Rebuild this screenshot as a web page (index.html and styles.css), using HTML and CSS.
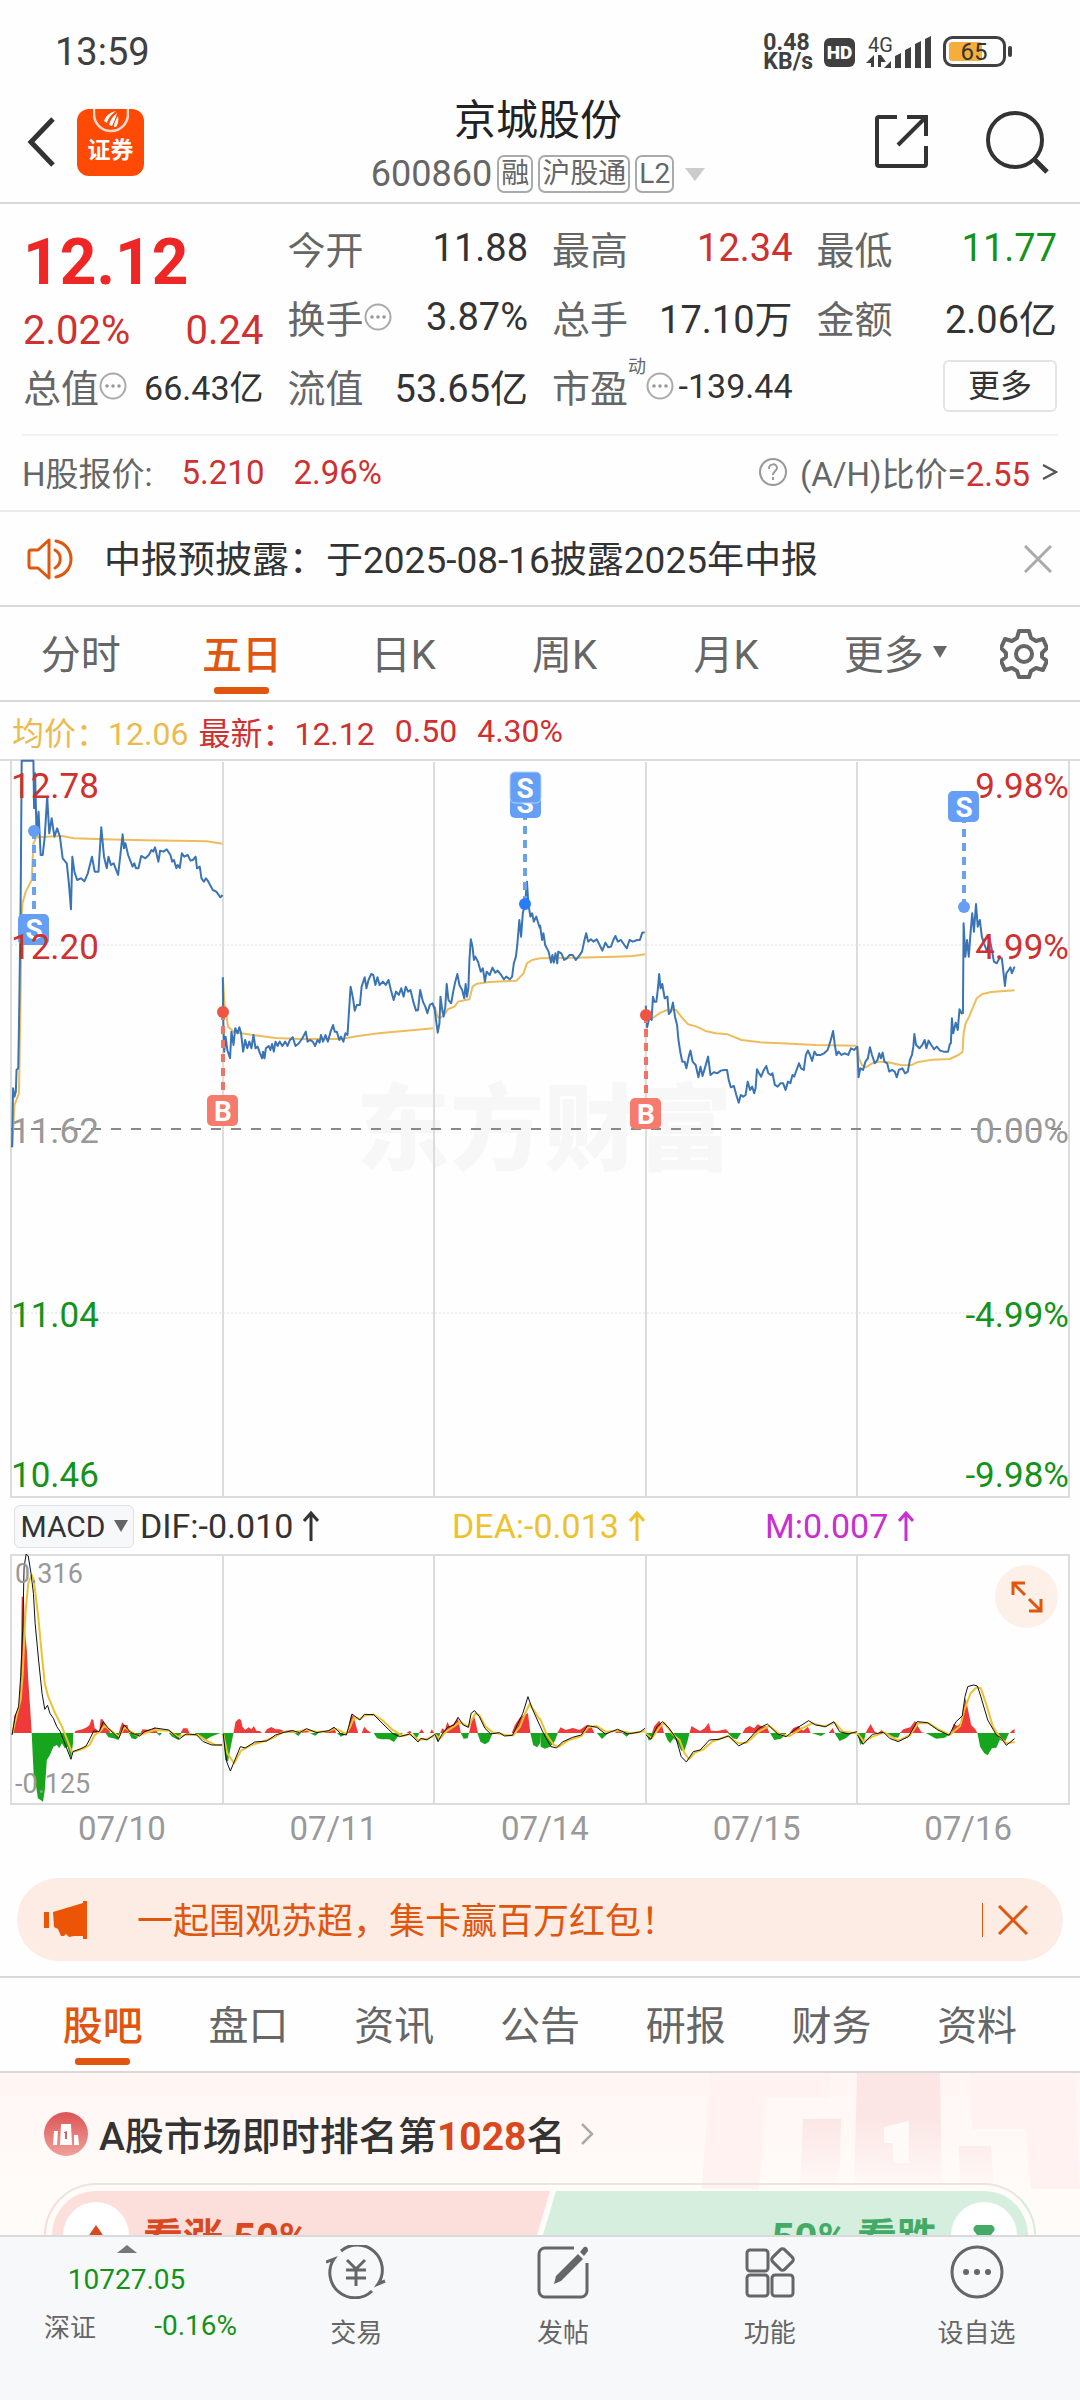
FILE: index.html
```html
<!DOCTYPE html>
<html lang="zh-CN">
<head>
  <meta charset="UTF-8">
  <meta name="viewport" content="width=device-width, initial-scale=1.0">
  <title>京城股份 600860</title>
  <link rel="stylesheet" href="styles.css">
</head>
<body>

<div class="status-bar">
  <span class="clock">13:59</span>
  <div class="status-icons">
    <div class="net-speed"><span>0.48</span><span>KB/s</span></div>
    <span class="hd">HD</span>
    <svg width="66" height="36" viewBox="0 0 66 36">
      <text x="2" y="18" class="sig-text">4G</text>
      <path fill="#404040" d="M5 21v12h3V21L0 29h5zM12 33V21h3l5 7h-5v5z"/>
      <path fill="#404040" d="M18 34l7-7v7zM29 22l6-3v15h-6zM39 16l6-3v21h-6zM49 10l6-3v27h-6zM59 5l6-3v32h-6z"/>
    </svg>
    <svg width="70" height="32" viewBox="0 0 70 32">
      <rect x="1.5" y="1.5" width="60" height="28" rx="8" fill="none" stroke="#404040" stroke-width="3"/>
      <rect x="6" y="6" width="33" height="19" rx="3" fill="#f5ae3c"/>
      <rect x="65" y="10" width="4" height="11" rx="2" fill="#404040"/>
      <text x="31" y="24" text-anchor="middle" class="battery-text">65</text>
    </svg>
  </div>
</div>

<header class="top">
  <div class="top-left">
    <button class="icon-btn" aria-label="返回">
      <svg width="30" height="50" viewBox="0 0 30 50"><path d="M26 2L4 25l22 23" fill="none" stroke="#333" stroke-width="5"/></svg>
    </button>
    <a href="#" class="app-logo">
      <svg width="36" height="25" viewBox="0 0 36 25">
        <path d="M1 0v5a17 17 0 0 0 34 0V0" fill="none" stroke="#ffd9cc" stroke-width="2.5"/>
        <path d="M11 12c2-6 7-9 12-10-4 3-8 7-9 12zM16 16c1-5 4-9 8-12-1 4-3 9-5 13zM21 18c0-4 2-8 4-11 1 4 0 8-2 11z" fill="#fff"/>
      </svg>
      <span>证券</span>
    </a>
  </div>
  <div class="top-title">
    <h1>京城股份</h1>
    <div class="code-row">
      <span>600860</span><span class="tag">融</span><span class="tag">沪股通</span><span class="tag">L2</span>
      <svg class="caret" width="20" height="13" viewBox="0 0 20 13"><path d="M0 0h20L10 13z" fill="#ccc"/></svg>
    </div>
  </div>
  <div class="top-right">
    <button class="icon-btn" aria-label="分享">
      <svg width="54" height="54" viewBox="0 0 54 54" fill="none" stroke="#333" stroke-width="4">
        <path d="M22 2H4a2 2 0 0 0-2 2v45a2 2 0 0 0 2 2h45a2 2 0 0 0 2-2V31M32 2h19v19M51 2L23 30"/>
      </svg>
    </button>
    <button class="icon-btn" aria-label="搜索">
      <svg width="64" height="64" viewBox="0 0 64 64" fill="none" stroke="#333" stroke-width="4">
        <circle cx="30" cy="30" r="27"/><path d="M49 49l13 13" stroke-width="5"/>
      </svg>
    </button>
  </div>
</header>

<section class="quote">
  <div class="price-block">
    <div class="price">12.12</div>
    <div class="change"><span>2.02%</span><span>0.24</span></div>
  </div>
  <div class="cell"><span class="k">今开</span><span class="v">11.88</span></div>
  <div class="cell"><span class="k">最高</span><span class="v red">12.34</span></div>
  <div class="cell"><span class="k">最低</span><span class="v green">11.77</span></div>
  <div class="cell"><span class="k">换手<svg class="dots" viewBox="0 0 28 28"><use href="#dots"/></svg></span><span class="v">3.87%</span></div>
  <div class="cell"><span class="k">总手</span><span class="v">17.10万</span></div>
  <div class="cell"><span class="k">金额</span><span class="v">2.06亿</span></div>
  <div class="cell"><span class="k">总值<svg class="dots" viewBox="0 0 28 28"><use href="#dots"/></svg></span><span class="v small">66.43亿</span></div>
  <div class="cell"><span class="k">流值</span><span class="v">53.65亿</span></div>
  <div class="cell"><span class="k">市盈<sup>动</sup><svg class="dots" viewBox="0 0 28 28"><use href="#dots"/></svg></span><span class="v small">-139.44</span></div>
  <div class="cell end"><button class="more-btn">更多</button></div>
</section>

<section class="h-row">
  <span>H股报价:</span>
  <span class="red">5.210</span>
  <span class="red">2.96%</span>
  <a href="#" class="ah">
    <svg width="30" height="30" viewBox="0 0 30 30" fill="none" stroke="#999" stroke-width="2">
      <circle cx="15" cy="15" r="13"/><path d="M11 12c0-6 8-6 8-1 0 3-4 3-4 7"/><path d="M15 20v3"/>
    </svg>
    <span>(A/H)比价=<b class="red">2.55</b></span>
    <svg width="16" height="20" viewBox="0 0 16 20"><path d="M1 3l13 7-13 7" fill="none" stroke="#555" stroke-width="2.5"/></svg>
  </a>
</section>

<section class="notice">
  <svg width="48" height="42" viewBox="0 0 48 42" fill="none" stroke="#e0560f" stroke-width="3">
    <path d="M22 2v38L11 30H4a2 2 0 0 1-2-2V14a2 2 0 0 1 2-2h7z" stroke-linejoin="round"/>
    <path d="M28 12c7 4 7 14 0 18M29 3c20 4 20 32 0 36" stroke-linecap="round"/>
  </svg>
  <span class="notice-text">中报预披露：于2025-08-16披露2025年中报</span>
  <button class="icon-btn" aria-label="关闭">
    <svg width="28" height="28" viewBox="0 0 28 28"><path d="M1 1l26 26M27 1L1 27" stroke="#aaa" stroke-width="3"/></svg>
  </button>
</section>

<nav class="tabs period">
  <a href="#">分时</a>
  <a href="#" class="active">五日</a>
  <a href="#">日K</a>
  <a href="#">周K</a>
  <a href="#">月K</a>
  <a href="#" class="more-tab">更多<svg width="14" height="12" viewBox="0 0 14 12"><path d="M0 0h14L7 12z" fill="#666"/></svg></a>
  <button class="icon-btn gear" aria-label="设置">
    <svg width="48" height="50" viewBox="0 0 48 50" fill="none" stroke="#666" stroke-width="4" stroke-linejoin="round">
      <path d="M19 2h10l2 7 5 3 7-2 4 9-5 5v4l5 4-4 9-7-2-5 3-2 6H19l-2-6-5-3-7 2-4-9 5-4v-4l-5-5 4-9 7 2 5-3z"/>
      <circle cx="24" cy="25" r="8"/>
    </svg>
  </button>
</nav>

<div class="avg-row">
  <span class="yellow">均价：12.06</span>
  <span class="red">最新：12.12</span>
  <span class="red gap">0.50</span>
  <span class="red gap">4.30%</span>
</div>

<!-- 五日分时图 -->
<svg class="chart" viewBox="0 759 1080 739">
  <g class="watermark"><text x="356" y="1163">东方财富</text></g>
  <g class="grid">
    <path d="M0 760H1080M11 760V1497H1069V760M223 762V1497M434 762V1497M646 762V1497M857 762V1497"/>
    <path d="M11 945H1069M11 1313H1069" class="dotted"/>
    <path d="M11 1129H1069" class="zero"/>
  </g>
  <g transform="translate(0 740) scale(.3444 .3333)">
    <path class="avg" d="M36 1222L40 1130 42 1095 55 1060 60 760 62 560 65 490 75 455 92 420 97 310 105 292 180 288 215 295 300 298 420 301 560 303 600 304 646 311M647 712L652 790 662 860 680 877 740 886 800 894 870 897 990 897 1040 888 1100 880 1180 872 1258 865M1262 800L1270 830 1276 835 1290 825 1300 808 1320 800 1330 785 1363 778 1372 740 1385 731 1420 726 1500 722 1520 700 1530 670 1545 660 1568 655"/>
    <path class="line" d="M35 1222L38 1045 42 1070 46 1055 48 990 53 985 56 800 60 480 63 62 97 62 99 205 102 100 106 280 112 215 118 345 124 345 130 290 137 170 143 280 150 235 158 290 166 265 174 290 182 355 194 370 200 430 206 508 210 350 216 395 224 420 235 415 245 424 255 400 267 350 275 395 286 395 294 262 302 350 310 385 315 350 322 375 330 370 343 405 350 340 356 283 360 325 364 310 372 345 385 380 390 370 395 385 402 385 410 348 422 355 432 345 440 330 445 335 450 322 460 365 465 332 475 335 484 328 495 345 500 365 505 360 512 385 516 375 522 384 528 340 535 350 545 345 553 362 560 360 568 350 572 385 580 380 585 415 592 425 598 415 605 425 618 450 628 455 640 472 646 465"/>
    <path class="line" d="M647 712L648 830 651 935 655 890 660 930 668 955 672 875 678 915 683 865 690 880 695 862 700 880 706 935 712 900 718 925 724 905 730 925 736 885 742 925 748 920 755 940 761 955 764 935 768 955 772 925 780 918 785 930 790 912 795 935 800 905 806 918 812 905 820 918 828 905 835 918 842 900 850 892 858 918 868 910 878 895 888 875 893 905 900 900 908 905 915 918 922 900 928 908 932 885 938 905 945 885 952 905 960 875 967 855 972 875 978 875 985 900 990 890 997 905 1003 880 1009 885 1013 820 1018 740 1025 775 1030 812 1036 795 1045 795 1050 740 1059 712 1064 745 1070 720 1078 702 1084 705 1090 735 1096 712 1102 735 1112 725 1120 735 1128 720 1135 750 1143 780 1150 755 1158 765 1165 745 1172 770 1178 740 1185 755 1192 750 1200 785 1208 812 1214 810 1220 750 1228 785 1235 800 1241 820 1248 795 1256 790 1261 805"/>
    <path class="line" d="M1261 800L1266 840 1271 878 1276 850 1279 770 1284 810 1288 830 1293 800 1297 732 1302 780 1310 790 1316 755 1322 725 1328 702 1334 735 1342 750 1348 775 1352 732 1356 770 1360 745 1363 660 1367 598 1372 620 1376 660 1380 650 1388 665 1396 695 1402 685 1408 725 1413 695 1422 705 1430 683 1438 698 1445 692 1455 705 1463 718 1470 710 1480 718 1487 710 1492 670 1498 650 1502 615 1508 540 1513 590 1518 520 1525 490 1530 425 1534 490 1540 530 1545 520 1550 545 1557 530 1563 550 1568 565"/>
  </g>
  <g transform="translate(540 740) scale(.3444 .3333)">
    <path class="avg" d="M0 655L100 653 220 650 270 648 305 643M312 840L330 832 350 818 370 810 395 810 410 830 430 853 455 860 480 873 510 880 545 883 585 900 640 907 700 910 800 915 918 917M922 920L926 955 935 975 945 982 965 970 985 965 1010 967 1050 976 1080 975 1095 967 1140 959 1190 957 1215 945 1227 935 1230 880 1236 850 1246 830 1258 800 1268 775 1285 762 1310 756 1378 751"/>
    <path class="line" d="M0 555L6 600 10 580 15 615 25 635 32 668 36 645 40 668 45 640 50 670 53 635 62 640 70 660 78 655 86 645 95 645 104 660 112 650 122 635 128 605 134 580 140 605 148 598 155 605 165 598 173 615 181 632 190 608 198 622 206 620 213 600 219 588 226 605 235 600 245 615 252 625 260 600 270 605 282 600 290 600 297 578 304 577"/>
    <path class="line" d="M307 797L311 862 318 830 324 840 328 770 332 785 338 785 342 750 346 702 350 745 355 732 362 775 370 770 374 822 380 815 386 788 392 830 398 855 402 900 408 940 413 965 420 965 425 985 432 950 437 932 443 965 452 975 460 1012 466 980 472 1008 480 980 488 950 495 1005 505 997 515 1000 525 992 535 990 543 990 548 1020 554 1042 563 1038 570 1065 577 1088 583 1065 590 1070 597 1065 603 1025 610 1050 616 1040 622 1060 626 1045 630 988 636 1000 642 1010 650 990 657 978 663 1000 670 1005 675 1000 682 1035 690 1040 698 1030 706 1030 713 1050 720 1025 727 1030 733 1005 738 1010 745 990 752 970 758 985 766 990 772 945 778 932 784 945 790 963 797 935 803 945 815 945 825 940 835 930 843 905 851 873 856 915 861 945 867 935 875 945 885 940 895 945 903 925 912 930 921 920 925 1012 930 985 938 990 945 965 952 955 958 922 964 945 972 970 980 960 985 940 990 955 995 938 1000 965 1008 970 1014 995 1022 990 1030 995 1036 1012 1042 990 1052 985 1060 1000 1068 995 1074 960 1080 945 1084 920 1087 882 1092 915 1102 925 1110 915 1117 900 1122 925 1128 902 1136 915 1144 928 1152 920 1162 932 1172 935 1185 935 1190 912 1193 910 1196 835 1200 880 1207 848 1213 870 1218 808 1224 820 1228 820 1230 550 1235 650 1240 600 1245 650 1250 580 1255 520 1260 575 1266 492 1271 560 1277 540 1283 590 1290 612 1298 635 1306 598 1312 630 1318 665 1326 670 1334 655 1341 655 1346 700 1350 738 1354 700 1361 690 1366 682 1370 700 1378 680"/>
  </g>
  <!-- 买卖点 -->
  <g class="sell">
    <path d="M34 831V914M525 904V818M964 907V822"/>
    <circle cx="34" cy="831" r="6"/><circle cx="525" cy="904" r="6" class="strong"/><circle cx="964" cy="907" r="6"/>
    <rect x="18" y="914" width="31" height="31" rx="5"/><text x="34" y="939">S</text>
    <rect x="510" y="787" width="31" height="31" rx="5"/><text x="525" y="813">S</text>
    <rect x="510" y="772" width="31" height="31" rx="5" class="top-mark"/><text x="525" y="798">S</text>
    <rect x="948" y="791" width="31" height="31" rx="5"/><text x="964" y="817">S</text>
  </g>
  <g class="buy">
    <path d="M223 1012V1095M646 1015V1098"/>
    <circle cx="223" cy="1012" r="6"/><circle cx="646" cy="1015" r="6"/>
    <rect x="207" y="1095" width="31" height="31" rx="5"/><text x="223" y="1121">B</text>
    <rect x="630" y="1098" width="31" height="31" rx="5"/><text x="646" y="1124">B</text>
  </g>
  <g class="axis">
    <text x="11" y="798" class="up">12.78</text><text x="1069" y="798" class="up right">9.98%</text>
    <text x="11" y="959" class="up">12.20</text><text x="1069" y="959" class="up right">4.99%</text>
    <text x="11" y="1143" class="flat">11.62</text><text x="1069" y="1143" class="flat right">0.00%</text>
    <text x="11" y="1327" class="down">11.04</text><text x="1069" y="1327" class="down right">-4.99%</text>
    <text x="11" y="1487" class="down">10.46</text><text x="1069" y="1487" class="down right">-9.98%</text>
  </g>
</svg>

<div class="macd-row">
  <div class="macd-item"><button class="macd-btn">MACD<svg width="14" height="12" viewBox="0 0 14 12"><path d="M0 0h14L7 12z" fill="#666"/></svg></button><span>DIF:-0.010<svg class="arrow" viewBox="0 0 16 30"><path d="M8 30V2M1 10l7-8 7 8"/></svg></span></div>
  <span class="dea">DEA:-0.013<svg class="arrow" viewBox="0 0 16 30"><path d="M8 30V2M1 10l7-8 7 8"/></svg></span>
  <span class="m">M:0.007<svg class="arrow" viewBox="0 0 16 30"><path d="M8 30V2M1 10l7-8 7 8"/></svg></span>
</div>

<!-- MACD 指标图 -->
<div class="macd-chart">
  <svg class="chart" viewBox="0 1554 1080 251">
    <g class="grid"><path d="M11 1555H1069V1804H11zM223 1555V1804M434 1555V1804M646 1555V1804M857 1555V1804"/></g>
    <g transform="translate(0 1480) scale(.3444 .3333)">
      <path class="pos" d="M35 759L42 705 55 690 60 600 63 350 68 350 70 370 73 460 78 510 82 600 88 690 92 759zM216 759L220 752 240 748 252 742 260 735 266 717 271 720 275 745 280 748 288 757 292 718 298 718 305 735 315 745 320 759zM345 759L350 740 355 727 362 735 370 735 376 759zM408 759L414 748 440 750 450 742 458 759zM524 759L532 745 544 745 550 759zM678 759L684 725 694 716 700 720 704 740 712 750 722 742 730 748 737 738 745 753 755 753 760 759zM768 759L775 748 788 741 800 748 812 748 825 753 850 750 858 759zM874 759L885 746 900 757zM940 759L960 748 970 742 976 759zM1010 759L1015 725 1020 704 1027 708 1033 735 1040 759zM1050 759L1058 740 1066 750 1078 759zM1180 759L1190 752 1196 759zM1216 759L1224 747 1232 759zM1248 759L1254 748 1260 759zM1278 759L1284 745 1292 750 1299 725 1306 740 1316 732 1330 715 1338 759zM1362 759L1368 730 1376 705 1384 740 1388 759zM1486 759L1495 735 1508 715 1520 705 1533 700 1540 759z"/>
      <path class="neg" d="M92 759L98 890 105 920 110 955 125 965 130 930 136 840 145 825 155 800 165 795 172 805 180 790 188 805 196 800 206 835 212 790 213 759zM306 759L315 772 330 775 344 780 350 759zM374 759L382 775 394 778 408 765 415 759zM455 759L464 767 470 759zM490 759L500 770 518 780 526 759zM565 759L580 770 594 782 612 770 640 759zM647 759L654 840 662 845 670 800 678 759zM855 759L866 768 874 759zM900 759L915 767 925 759zM978 759L990 770 1000 765 1008 759zM1085 759L1095 775 1108 778 1130 778 1144 786 1155 770 1170 759zM1198 759L1210 775 1218 759zM1262 759L1272 785 1278 759zM1338 759L1346 776 1358 775 1362 759zM1386 759L1395 785 1408 793 1420 785 1430 759zM1540 759L1548 795 1560 802 1568 790 1568 759z"/>
      <path class="dea-line" d="M36 762L50 700 60 660 66 580 74 400 82 310 92 285 98 300 104 350 112 420 122 530 130 610 140 650 160 700 180 740 195 780 208 815 225 812 245 805 260 795 275 765 290 755 303 738 320 750 345 770 362 742 380 755 400 768 420 760 450 750 490 752 515 770 545 764 575 765 600 782 625 795 645 796M648 762L660 820 680 850 700 812 730 795 760 786 790 775 820 757 860 755 890 750 920 756 950 754 975 746 1005 762 1018 738 1028 712 1045 718 1060 706 1085 704 1110 720 1140 750 1170 768 1190 762 1215 780 1240 776 1260 768M1262 762L1278 776 1295 755 1320 738 1335 726 1360 740 1380 700 1392 706 1410 740 1430 757 1470 766 1490 766 1510 740 1525 700 1538 672 1550 690 1568 720"/>
      <path class="dif-line" d="M35 765L45 705 54 680 60 590 66 450 70 260 76 222 82 228 90 280 97 340 102 430 112 540 122 640 130 688 138 676 145 700 155 715 165 740 175 755 188 790 206 838 212 815 235 806 250 798 262 775 272 753 288 755 300 725 312 742 345 775 360 735 380 758 405 768 420 755 450 744 490 750 520 778 540 762 570 764 590 785 615 795 645 795M648 762L658 845 669 873 680 845 698 800 712 804 740 786 775 783 800 765 825 757 850 752 870 758 890 746 920 758 955 752 970 742 990 762 1006 765 1015 730 1022 702 1045 720 1058 703 1085 704 1115 735 1140 760 1160 770 1190 762 1214 786 1222 775 1240 780 1260 765M1262 762L1272 785 1284 762 1300 742 1318 735 1330 712 1345 735 1360 742 1368 700 1378 692 1392 710 1408 745 1425 762 1450 758 1465 768 1488 766 1502 735 1518 700 1533 650 1545 685 1568 738"/>
    </g>
    <g transform="translate(540 1480) scale(.3444 .3333)">
      <path class="pos" d="M50 759L60 742 75 750 95 744 115 750 136 735 150 742 158 759zM218 759L228 748 240 759zM325 759L332 738 346 722 354 735 360 759zM434 759L440 738 455 748 465 753 478 745 490 729 496 752 515 753 540 748 550 759zM588 759L596 745 608 738 622 745 632 733 645 740 658 738 666 759zM725 759L735 745 750 738 764 752 778 740 786 759zM838 759L850 744 856 759zM945 759L960 732 972 755 980 759zM982 759L992 750 1000 759zM1045 759L1055 748 1075 742 1089 722 1098 740 1108 757 1120 759zM1195 759L1200 732 1212 738 1222 728 1228 690 1236 655 1243 690 1252 735 1264 748 1270 759zM1364 759L1370 752 1378 747 1378 759z"/>
      <path class="neg" d="M0 759L2 800 14 806 30 800 42 785 52 759zM165 759L180 777 195 762 200 759zM238 759L252 770 262 759zM308 759L316 782 326 775 330 759zM362 759L370 780 378 790 388 775 398 785 410 812 420 810 428 785 434 759zM545 759L560 775 572 778 584 759zM668 759L680 780 700 776 716 759zM788 759L816 768 830 759zM855 759L870 783 888 775 905 759zM921 759L930 795 940 785 946 759zM1004 759L1020 770 1040 773 1046 759zM1120 759L1150 776 1175 773 1195 759zM1270 759L1278 800 1290 820 1300 826 1312 805 1325 803 1335 780 1350 785 1362 759z"/>
      <path class="dea-line" d="M0 715L20 765 40 795 55 800 80 782 120 768 140 742 165 738 190 755 230 752 265 760 305 754M308 762L325 775 345 745 360 728 385 762 405 780 420 820 432 838 450 818 475 808 500 785 545 768 575 790 600 788 635 755 665 738 700 765 725 768 760 745 790 730 825 740 855 728 880 755 920 760M922 760L940 785 965 770 1000 758 1040 782 1075 765 1098 730 1130 730 1160 750 1190 764 1220 738 1232 690 1250 640 1268 622 1280 625 1295 670 1315 740 1335 772 1355 790 1378 786"/>
      <path class="dif-line" d="M0 738L15 770 32 800 48 804 65 786 95 772 120 765 138 737 165 742 190 762 225 748 255 762 290 756 305 745M308 765L322 778 340 740 356 725 375 745 395 775 410 830 425 846 445 815 465 810 492 780 520 778 548 768 577 798 600 785 635 745 660 732 690 762 715 770 745 745 780 722 800 735 830 740 853 725 870 755 895 762 920 755M922 765L938 793 965 763 998 757 1015 775 1040 785 1070 770 1095 725 1125 728 1155 750 1188 766 1208 725 1226 708 1234 650 1242 620 1258 615 1270 618 1280 650 1300 720 1325 765 1340 775 1354 796 1378 776"/>
    </g>
    <g class="macd-axis"><text x="15" y="1583">0.316</text><text x="15" y="1793">-0.125</text></g>
  </svg>
  <button class="expand" aria-label="全屏">
    <svg width="32" height="32" viewBox="0 0 32 32" fill="none" stroke="#e0560f" stroke-width="3"><path d="M14 2H2v12M2 2l12 12M18 30h12V18M30 30L18 18"/></svg>
  </button>
</div>

<div class="dates"><span>07/10</span><span>07/11</span><span>07/14</span><span>07/15</span><span>07/16</span></div>

<div class="promo">
  <svg width="44" height="38" viewBox="0 0 44 38" fill="#eb5505"><path d="M0 11h5v16H0zM9 11L39 2V0h4v38h-4v-3h-9l-5 1-3-3-2 2h-3l-3-7-4-2z"/></svg>
  <a href="#">一起围观苏超，集卡赢百万红包！</a>
  <button class="icon-btn" aria-label="关闭广告">
    <svg width="30" height="30" viewBox="0 0 30 30"><path d="M1 1l28 28M29 1L1 29" stroke="#e0560f" stroke-width="3"/></svg>
  </button>
</div>

<nav class="tabs info">
  <a href="#" class="active">股吧</a>
  <a href="#">盘口</a>
  <a href="#">资讯</a>
  <a href="#">公告</a>
  <a href="#">研报</a>
  <a href="#">财务</a>
  <a href="#">资料</a>
</nav>

<section class="rank">
  <svg class="rank-bg" width="378" height="116" viewBox="0 0 378 116">
    <defs><linearGradient id="fade" x1="0" y1="0" x2="0" y2="1"><stop offset=".4" stop-color="#fbe6e5"/><stop offset="1" stop-color="#fffaf8"/></linearGradient></defs>
    <path fill="#fff2f0" d="M8 0h120l-1 25H63l-6 91H0zM267 0h106l5 116h-49l-5-60h-54z"/>
    <path fill="url(#fade)" d="M155 0h83l2 116h-88zM101 46h38l-2 70H98zM257 73h32l3 43h-34z"/>
    <path fill="#fffaf8" d="M182 54l25-6v42h-16V70h-9z"/>
  </svg>
  <a href="#" class="rank-title">
    <svg width="44" height="44" viewBox="0 0 44 44">
      <defs><linearGradient id="badge" x1="0" y1="0" x2="0" y2="1"><stop offset="0" stop-color="#dc5454"/><stop offset="1" stop-color="#f0a09c"/></linearGradient></defs>
      <circle cx="22" cy="22" r="22" fill="url(#badge)"/>
      <path fill="#fff" d="M10 19h4l-1 14H9zM17 12h10l1 21H16zM30 23h4l1 10h-5z"/>
      <path fill="#dc6060" d="M20 20l3-1v8h-2v-6h-1z"/>
    </svg>
    <span>A股市场即时排名第<b>1028</b>名</span>
    <svg width="14" height="22" viewBox="0 0 14 22"><path d="M2 1l10 10L2 21" fill="none" stroke="#aaa" stroke-width="2.5"/></svg>
  </a>
  <div class="vote">
    <button class="vote-up"><i><svg width="28" height="20" viewBox="0 0 28 20"><path d="M14 0l13 19H1z" fill="#da4820"/></svg></i>看涨 50%</button>
    <button class="vote-down">50% 看跌<i><svg width="22" height="20" viewBox="0 0 22 20"><path d="M3 0h16q4 3 2 6L11 19 1 6q-2-3 2-6z" fill="#43ab65"/></svg></i></button>
  </div>
</section>

<footer class="bottom-nav">
  <a href="#" class="index-box">
    <svg width="20" height="8" viewBox="0 0 20 8"><path d="M0 8L10 0l10 8z" fill="#777"/></svg>
    <span class="index-value">10727.05</span>
    <span class="index-row"><span>深证</span><span class="index-pct">-0.16%</span></span>
  </a>
  <a href="#">
    <svg width="60" height="54" viewBox="0 0 60 54" fill="none" stroke="#666" stroke-width="3">
      <path d="M15 6A25 25 0 0 1 52 39l7-3M46 46A25 25 0 0 1 8 14l-8 3M21 15l9 9 9-9M30 24v17M20 25h20M20 33h20"/>
    </svg>
    <span>交易</span>
  </a>
  <a href="#">
    <svg width="52" height="54" viewBox="0 0 52 54">
      <path d="M37 3H8a6 6 0 0 0-6 6v37a6 6 0 0 0 6 6h36a6 6 0 0 0 6-6V18" fill="none" stroke="#666" stroke-width="3"/>
      <path d="M41 9l5 5-22 22-7 3 2-8zM43 7l4-5q4-1 4 4l-4 5z" fill="#666"/>
    </svg>
    <span>发帖</span>
  </a>
  <a href="#">
    <svg width="52" height="54" viewBox="0 0 52 54" fill="none" stroke="#666" stroke-width="3">
      <rect x="3" y="5" width="21" height="21" rx="3"/><rect x="3" y="30" width="21" height="21" rx="3"/><rect x="28" y="30" width="21" height="21" rx="3"/>
      <rect x="30" y="6" width="17" height="17" rx="3" transform="rotate(45 38.500 14.500)"/>
    </svg>
    <span>功能</span>
  </a>
  <a href="#">
    <svg width="54" height="54" viewBox="0 0 54 54"><circle cx="27" cy="27" r="25" fill="none" stroke="#666" stroke-width="3"/><g fill="#666"><circle cx="16" cy="27" r="3"/><circle cx="27" cy="27" r="3"/><circle cx="38" cy="27" r="3"/></g></svg>
    <span>设自选</span>
  </a>
</footer>

<svg class="sprite">
  <symbol id="dots" viewBox="0 0 28 28">
    <circle cx="14" cy="14" r="12.500" fill="none" stroke="#aaa" stroke-width="2"/>
    <g fill="#999"><circle cx="8" cy="14" r="1.800"/><circle cx="14" cy="14" r="1.800"/><circle cx="20" cy="14" r="1.800"/></g>
  </symbol>
</svg>

</body>
</html>
```

FILE: styles.css
```css
* {
  box-sizing: border-box;
}
body {
  margin: 0;
  font-family: Roboto, "Noto Sans CJK SC", sans-serif;
  font-size: 32px;
  color: #333;
  background: #fefefe;
}
a {
  color: inherit;
  text-decoration: none;
}
button {
  font: inherit;
  color: inherit;
  padding: 0;
  border: none;
  background: none;
}
svg {
  display: block;
  flex: none;
}
b {
  font-weight: inherit;
}
.red { color: #cf3030; }
.green { color: #14931a; }
.yellow { color: #ecbb50; }
.sprite {
  width: 0;
  height: 0;
  position: absolute;
}
.icon-btn {
  display: flex;
}

/* 状态栏 */
.status-bar {
  display: flex;
  justify-content: space-between;
  align-items: center;
  height: 82px;
  padding: 22px 67px 0 55px;
}
.clock {
  font-size: 38px;
  color: #404040;
}
.status-icons {
  display: flex;
  align-items: center;
  gap: 11px;
  color: #404040;
}
.status-icons svg {
  overflow: visible;
}
.net-speed {
  display: flex;
  flex-direction: column;
  font-size: 23px;
  line-height: 19px;
  font-weight: 700;
}
.hd {
  width: 31px;
  height: 29px;
  border-radius: 6px;
  background: #404040;
  color: #fff;
  font-size: 19px;
  line-height: 29px;
  font-weight: 900;
  text-align: center;
}
.sig-text {
  font-size: 20px;
  fill: #404040;
}
.battery-text {
  font-size: 24px;
  fill: #333;
}

/* 顶部 */
.top {
  display: grid;
  grid-template-columns: 1fr auto 1fr;
  align-items: center;
  height: 122px;
  padding: 0 31px 0 27px;
  border-bottom: 2px solid #d9d9d9;
}
.top-left {
  display: flex;
  align-items: center;
  gap: 20px;
}
.app-logo {
  display: flex;
  flex-direction: column;
  align-items: center;
  width: 67px;
  height: 67px;
  border-radius: 12px;
  background: #ff4a05;
  color: #fff;
  font-size: 23px;
  line-height: 34px;
  font-weight: 700;
}
.top-title {
  display: flex;
  flex-direction: column;
  align-items: center;
  padding-top: 8px;
}
h1 {
  margin: 0;
  font-size: 42px;
  line-height: 56px;
  font-weight: 400;
  color: #222;
}
.code-row {
  display: flex;
  align-items: center;
  gap: 5px;
  height: 50px;
  font-size: 36px;
  color: #666;
}
.tag {
  height: 38px;
  padding: 0 2px;
  border: 2px solid #aaa;
  border-radius: 7px;
  font-size: 28px;
  line-height: 34px;
}
.caret {
  margin-left: 6px;
}
.top-right {
  display: flex;
  justify-content: flex-end;
  align-items: center;
  gap: 56px;
}

/* 报价 */
.quote {
  display: grid;
  grid-template-columns: repeat(4, 1fr);
  grid-auto-rows: 69px;
  column-gap: 24px;
  padding: 9px 23px 14px;
}
.price-block {
  grid-row: span 2;
  color: #cf3030;
}
.price {
  padding-top: 14px;
  font-size: 64px;
  line-height: 72px;
  font-weight: 700;
  color: #ee2726;
}
.change {
  display: flex;
  justify-content: space-between;
  font-size: 40px;
  line-height: 64px;
}
.cell {
  display: flex;
  justify-content: space-between;
  align-items: center;
  white-space: nowrap;
}
.k {
  display: flex;
  align-items: center;
  font-size: 38px;
  color: #666;
}
.k sup {
  align-self: flex-start;
  font-size: 18px;
  line-height: 18px;
}
.dots {
  width: 28px;
  height: 28px;
}
.v {
  font-size: 38px;
}
.v.small {
  font-size: 34px;
}
.end {
  justify-content: flex-end;
}
.more-btn {
  width: 114px;
  height: 52px;
  border: 2px solid #e3e4e6;
  border-radius: 6px;
  font-size: 32px;
  line-height: 46px;
}

.h-row {
  display: flex;
  align-items: center;
  gap: 29px;
  height: 76px;
  margin: 0 22px;
  padding-bottom: 2px;
  border-top: 2px solid #f2f2f2;
  font-size: 33px;
  color: #666;
}
.ah {
  display: flex;
  align-items: center;
  gap: 12px;
  margin-left: auto;
}

.notice {
  display: flex;
  align-items: center;
  gap: 29px;
  height: 97px;
  padding: 0 28px 0 27px;
  border-top: 2px solid #ececec;
  border-bottom: 2px solid #d9d9d9;
  font-size: 37px;
}
.notice-text {
  flex: 1;
  padding-bottom: 4px;
}

/* 标签栏 */
.tabs {
  display: grid;
  grid-template-columns: repeat(7, 1fr);
  height: 95px;
  border-bottom: 2px solid #d9d9d9;
  font-size: 40px;
  color: #666;
}
.period {
  grid-template-columns: repeat(6, 1fr) 112px;
}
.tabs a {
  position: relative;
  display: flex;
  justify-content: center;
  align-items: center;
  gap: 9px;
  padding-bottom: 4px;
}
.tabs .active {
  color: #e0560f;
  font-weight: 500;
}
.tabs .active::after {
  content: "";
  position: absolute;
  bottom: 6px;
  width: 55px;
  height: 7px;
  border-radius: 3px;
  background: #e0560f;
}
.tabs .more-tab {
  padding-left: 16px;
}
.gear {
  justify-content: center;
  align-items: center;
}

.avg-row {
  display: flex;
  align-items: center;
  gap: 10px;
  height: 57px;
  padding: 0 12px;
  font-size: 32px;
}
.avg-row .gap {
  padding-left: 10px;
}

/* 图表 */
.chart {
  width: 100%;
  height: auto;
}
.watermark text {
  font-size: 94px;
  font-weight: 900;
  fill: #f7f7f7;
}
.grid path {
  fill: none;
  stroke: #dcdcdc;
  stroke-width: 2;
}
.grid .dotted {
  stroke-dasharray: 2 2;
  stroke-width: 1;
}
.grid .zero {
  stroke: #888;
  stroke-dasharray: 10 10;
}
.avg, .line, .dif-line, .dea-line {
  fill: none;
  stroke: #edbd5c;
  stroke-width: 2;
  stroke-linejoin: round;
  vector-effect: non-scaling-stroke;
}
.line {
  stroke: #3a74b5;
}
.dif-line {
  stroke: #111;
  stroke-width: 1;
}
.dea-line {
  stroke: #ecc22e;
}
.pos { fill: #f03a3a; }
.neg { fill: #16a51c; }
.sell path, .buy path {
  fill: none;
  stroke: #6ba2ea;
  stroke-width: 4;
  stroke-dasharray: 8 6;
}
.buy path { stroke: #ef7466; }
.sell rect, .sell circle { fill: #649ff5; }
.buy rect { fill: #f67b6c; }
.buy circle { fill: #ef5544; }
.sell .strong { fill: #2a7bf5; }
.sell .top-mark {
  stroke: #b5d2fb;
  stroke-width: 1;
}
.sell text, .buy text {
  font-size: 28px;
  font-weight: 700;
  fill: #fff;
  text-anchor: middle;
}
.axis {
  font-size: 35px;
}
.axis .right {
  text-anchor: end;
}
.up { fill: #cf3030; }
.flat { fill: #999; }
.down { fill: #14931a; }
.macd-axis {
  font-size: 27px;
  fill: #999;
}
.macd-row {
  display: grid;
  grid-template-columns: 438px 313px 1fr;
  align-items: center;
  height: 56px;
  padding: 0 14px;
  font-size: 34px;
}
.macd-item, .macd-row span {
  display: flex;
  align-items: center;
  gap: 6px;
}
.macd-btn {
  display: flex;
  justify-content: center;
  align-items: center;
  gap: 8px;
  width: 120px;
  height: 43px;
  border: 1px solid #e0e0e6;
  border-radius: 6px;
  background: #f7f8fa;
  font-size: 30px;
}
.arrow {
  width: 16px;
  height: 30px;
  margin-left: 4px;
  fill: none;
  stroke: currentColor;
  stroke-width: 3;
}
.macd-row .dea { color: #ecc22e; }
.macd-row .m { color: #c92fcf; }
.macd-chart {
  position: relative;
}
.expand {
  position: absolute;
  top: 11px;
  right: 22px;
  display: flex;
  justify-content: center;
  align-items: center;
  width: 63px;
  height: 63px;
  border-radius: 50%;
  background: #fdf0e9;
}
.dates {
  display: grid;
  grid-template-columns: repeat(5, 1fr);
  padding: 0 6px 0 16px;
  font-size: 33px;
  line-height: 48px;
  color: #999;
  text-align: center;
}

.promo {
  display: flex;
  align-items: center;
  height: 83px;
  margin: 25px 17px 15px;
  padding: 0 35px 0 27px;
  border-radius: 42px;
  background: #fcece3;
  font-size: 36px;
  color: #e0560f;
}
.promo a {
  flex: 1;
  padding: 0 0 4px 49px;
}
.promo .icon-btn {
  padding: 2px 0 2px 15px;
  border-left: 1px solid #e0560f;
}

.info {
  height: 97px;
  padding: 0 30px;
  border-top: 2px solid #d9d9d9;
}

/* 排名 */
.rank {
  position: relative;
  padding: 35px 44px 0;
  height: 238px;
  background: linear-gradient(#fff6f4, #fffbf8 50%, #fffbf8);
}
.rank-bg {
  position: absolute;
  top: 0;
  right: 0;
}
.rank-title {
  position: relative;
  display: flex;
  align-items: center;
  gap: 11px;
  height: 52px;
  font-size: 39px;
  font-weight: 500;
}
.rank-title span {
  padding-bottom: 3px;
}
.rank-title svg:last-child {
  margin-left: 4px;
}
.rank-title b {
  color: #da4820;
  font-weight: 700;
}
.vote {
  position: relative;
  display: flex;
  height: 104px;
  margin-top: 23px;
  padding: 6px;
  border: 2px solid;
  border-color: #e9e6dc #d5ebdc #e9e6dc #f9dcd7;
  border-radius: 52px;
}
.vote button {
  display: flex;
  align-items: center;
  gap: 14px;
  flex: 1;
  padding: 0 11px;
  font-size: 40px;
  font-weight: 700;
}
.vote .vote-up {
  border-radius: 44px 0 0 44px;
  background: #fcdedb;
  color: #da4820;
  clip-path: polygon(0 0, 100% 0, calc(100% - 26px) 100%, 0 100%);
}
.vote .vote-down {
  justify-content: flex-end;
  margin-left: -20px;
  border-radius: 0 44px 44px 0;
  background: #d6eedd;
  color: #43ab65;
  clip-path: polygon(26px 0, 100% 0, 100% 100%, 0 100%);
}
.vote i {
  display: flex;
  justify-content: center;
  align-items: center;
  width: 66px;
  height: 66px;
  border-radius: 50%;
  background: #fff;
  font-style: normal;
}

/* 底部导航 */
.bottom-nav {
  position: fixed;
  left: 0;
  right: 0;
  bottom: 0;
  display: grid;
  grid-template-columns: 253px repeat(4, 1fr);
  height: 165px;
  border-top: 2px solid #d9dadc;
  background: #f7f8fa;
  font-size: 26px;
  color: #666;
}
.bottom-nav a {
  display: flex;
  flex-direction: column;
  align-items: center;
  gap: 13px;
  padding-top: 8px;
}
.bottom-nav .index-box {
  gap: 9px;
}
.index-value {
  font-size: 28px;
  line-height: 36px;
  color: #14931a;
}
.index-row {
  display: flex;
  justify-content: space-between;
  align-items: center;
  align-self: stretch;
  padding: 0 16px 0 44px;
}
.index-pct {
  font-size: 28px;
  color: #14931a;
}
```
